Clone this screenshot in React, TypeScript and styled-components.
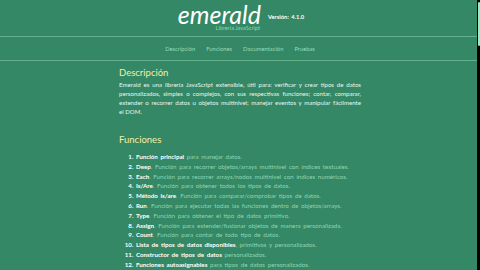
import React from "react";
import styled, { createGlobalStyle } from "styled-components";

const Global = createGlobalStyle`
  html { background: #348866; }
  body { margin: 0; background: #348866; font-family: Lato, "Open Sans", sans-serif; color: #fff; }
`;

const Page = styled.div`
  min-height: 1660px;
`;

const ScrollTrack = styled.div`
  position: fixed;
  top: 0;
  right: 0;
  width: 3px;
  height: 100vh;
  background: #000;
`;

const ScrollThumb = styled.div`
  margin-top: 2px;
  height: 44px;
  width: 2px;
  margin-left: 1px;
  background: #93eec4;
  border-radius: 1px;
`;

const Header = styled.header`
  display: flex;
  justify-content: center;
  align-items: flex-start;
  height: 36px;
  border-bottom: 1px solid #62b08c;
  padding-left: 2px;
`;

const TitleBlock = styled.div`
  display: flex;
  flex-direction: column;
  align-items: flex-end;
`;

const Title = styled.h1`
  margin: 0;
  margin-top: 2px;
  font-family: Lato, sans-serif;
  font-style: italic;
  font-weight: 400;
  font-size: 25px;
  line-height: 24px;
  color: #fff;
`;

const Subtitle = styled.div`
  font-size: 5.6px;
  line-height: 6px;
  margin-top: -1px;
  margin-right: 1px;
  color: #8fd6b2;
`;

const Version = styled.div`
  margin-left: 7px;
  margin-top: 13px;
  font-size: 5.8px;
  font-weight: 700;
  color: #fff;
  word-spacing: 1px;
`;

const Nav = styled.nav`
  display: flex;
  justify-content: center;
  align-items: center;
  gap: 11px;
  height: 23px;
  border-bottom: 1px solid #62b08c;
`;

const NavLink = styled.a`
  font-size: 5.8px;
  color: #95dcb6;
  text-decoration: none;
`;

const Main = styled.main`
  width: 242px;
  margin: 0 auto;
  padding-top: 5px;
`;

const Heading = styled.h2`
  margin: 0;
  font-size: 9.5px;
  line-height: 14px;
  font-weight: 400;
  color: #f2efa6;
`;

const Para = styled.p`
  margin: 0 0 17px;
  font-size: 6.1px;
  line-height: 9px;
  text-align: justify;
  color: #e8f6ee;
`;

const List = styled.ol`
  margin: 5px 0 0;
  padding-left: 17px;
  font-size: 6.2px;
  line-height: 9.8px;
  word-spacing: 1.1px;
  color: #8fd6b2;
  li::marker { color: #fff; font-weight: 700; }
`;

const Strong = styled.b`
  color: #fff;
  font-weight: 700;
`;

const items: [string, string][] = [
  ["Función principal", " para manejar datos."],
  ["Deep", ". Función para recorrer objetos/arrays multinivel con índices textuales."],
  ["Each", ". Función para recorrer arrays/nodos multinivel con índices numéricos."],
  ["Is/Are", ". Función para obtener todos los tipos de datos."],
  ["Método is/are", ". Función para comparar/comprobar tipos de datos."],
  ["Run", ". Función para ejecutar todas las funciones dentro de objetos/arrays."],
  ["Type", ". Función para obtener el tipo de datos primitivo."],
  ["Assign", ". Función para extender/fusionar objetos de manera personalizada."],
  ["Count", ". Función para contar de todo tipo de datos."],
  ["Lista de tipos de datos disponibles", ", primitivos y personalizados."],
  ["Constructor de tipos de datos", " personalizados."],
  ["Funciones autoasignables", " para tipos de datos personalizados."],
  ["Eventos", ". Funciones para manejar eventos del DOM."],
  ["Selectores", ". Funciones para seleccionar nodos del DOM."],
];

export default function App() {
  return (
    <Page>
      <Global />
      <Header>
        <TitleBlock>
          <Title>emerald</Title>
          <Subtitle>Librería JavaScript</Subtitle>
        </TitleBlock>
        <Version>Versión: 4.1.0</Version>
      </Header>
      <Nav>
        <NavLink href="#descripcion">Descripción</NavLink>
        <NavLink href="#funciones">Funciones</NavLink>
        <NavLink href="#documentacion">Documentación</NavLink>
        <NavLink href="#pruebas">Pruebas</NavLink>
      </Nav>
      <Main>
        <Heading id="descripcion">Descripción</Heading>
        <Para>
          Emerald es una librería JavaScript extensible, útil para: verificar y crear tipos de datos
          personalizados, simples o complejos, con sus respectivas funciones; contar, comparar,
          extender o recorrer datos u objetos multinivel; manejar eventos y manipular fácilmente
          el{"\u00a0"}DOM.
        </Para>
        <Heading id="funciones">Funciones</Heading>
        <List>
          {items.map(([b, t]) => (
            <li key={b}>
              <Strong>{b}</Strong>
              {t}
            </li>
          ))}
        </List>
      </Main>
      <ScrollTrack>
        <ScrollThumb />
      </ScrollTrack>
    </Page>
  );
}
